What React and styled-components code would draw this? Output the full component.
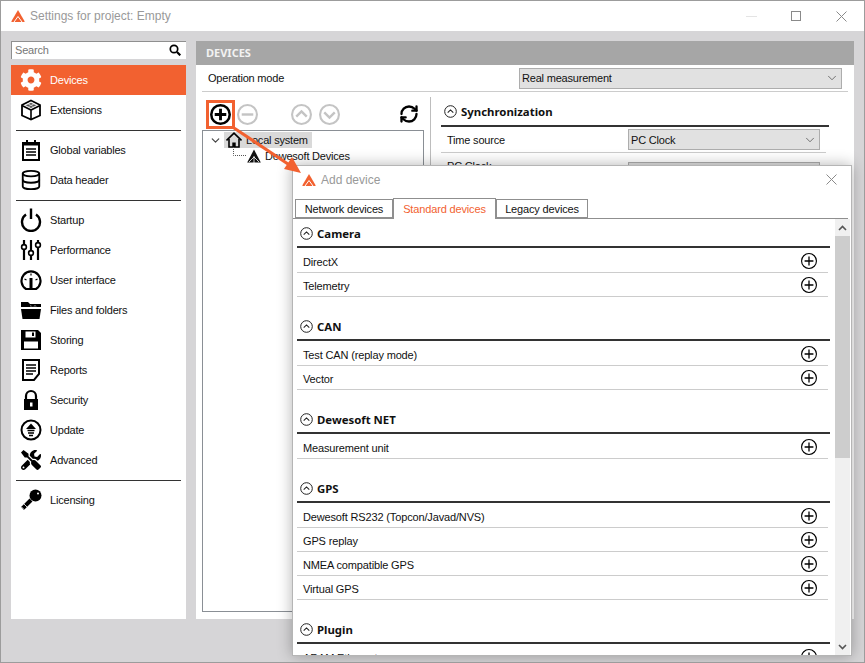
import styled, { createGlobalStyle } from "styled-components";
import { RefreshCw, ChevronDown, Database } from "lucide-react";
import { FaCog, FaTools } from "react-icons/fa";

const accent = "#f26130";

const GlobalStyle = createGlobalStyle`
  html, body {
    margin: 0;
    padding: 0;
    background: #d6d5d7;
  }
  * {
    box-sizing: border-box;
  }
  body {
    font-family: "Liberation Sans", "Noto Sans", sans-serif;
    font-size: 11px;
    letter-spacing: -0.2px;
    color: #111;
  }
`;

const Logo = ({ size = 14 }) => (
  <svg width={size} height={size} viewBox="0 0 14 14">
    <path d="M7 1 L13.6 12.2 Q14 13 13 13 L1 13 Q0 13 0.4 12.2 Z" fill={accent} />
    <path d="M7 7.5 L3 13 M7 7.5 L11 13" stroke="#fff" strokeWidth="1" fill="none" />
  </svg>
);

const Chip = ({ size = 14 }) => (
  <svg width={size} height={size} viewBox="0 0 14 14">
    <path d="M7 0.5 L13.8 13.5 L0.2 13.5 Z" fill="#111" />
    <path d="M7 7 L7 14 M7 8 L2 13 M7 8 L12 13" stroke="#fff" strokeWidth="0.8" fill="none" />
  </svg>
);

const CircleSign = ({ size = 20, color = "#000", width = 2, d }) => (
  <svg width={size} height={size} viewBox="0 0 20 20">
    <circle cx="10" cy="10" r={10 - width / 2} fill="none" stroke={color} strokeWidth={width} />
    <path d={d} fill="none" stroke={color} strokeWidth={width * 1.15} />
  </svg>
);

const plus = "M10 4.5 V15.5 M4.5 10 H15.5";
const minus = "M4.5 10 H15.5";
const up = "M5 12 L10 7 L15 12";
const down = "M5 8 L10 13 L15 8";

const SectionChevron = () => (
  <svg width="13" height="13" viewBox="0 0 13 13">
    <circle cx="6.5" cy="6.5" r="5.8" fill="none" stroke="#222" strokeWidth="1" />
    <path d="M3.7 7.6 L6.5 4.9 L9.3 7.6" fill="none" stroke="#222" strokeWidth="1.1" />
  </svg>
);

const Extensions = () => (
  <svg width="22" height="22" viewBox="0 0 22 22" fill="none" stroke="#000">
    <path d="M11 1.5 L20 6 V16.5 L11 20.5 L2 16.5 V6 Z" strokeWidth="1.8" />
    <path d="M2 6.5 L11 11 L20 6.5 M11 11 V20.5" strokeWidth="1.6" />
    <path d="M5.5 6.2 L11 9 L16.5 6.2 L11 3.4 Z" fill="#555" stroke="none" />
    <path d="M8 4.8 L13.5 7.6 M11 3.4 L16 6 M14 4.8 L8.5 7.6 M11 3.4 L6 6" stroke="#fff" strokeWidth="0.6" />
  </svg>
);

const Notepad = () => (
  <svg width="22" height="22" viewBox="0 0 22 22" fill="none" stroke="#000">
    <rect x="3" y="4" width="16" height="17" strokeWidth="2" />
    <path d="M3 5 H19" strokeWidth="3" />
    <path d="M7 1 V5 M15 1 V5" strokeWidth="2" />
    <path d="M6 10 H16 M6 13 H16 M6 16 H16" strokeWidth="1.5" />
  </svg>
);

const Power = () => (
  <svg width="22" height="24" viewBox="0 0 22 24" fill="none" stroke="#000" strokeWidth="2.4">
    <path d="M6 6.5 A9 9 0 1 0 16 6.5" />
    <path d="M11 0.5 V11" />
  </svg>
);

const Sliders = () => (
  <svg width="22" height="22" viewBox="0 0 22 22" fill="none" stroke="#000">
    <path d="M4 1 V21 M11 1 V21 M18 1 V21" strokeWidth="2.2" />
    <circle cx="4" cy="8" r="2.4" fill="#fff" strokeWidth="1.6" />
    <circle cx="11" cy="14" r="2.4" fill="#fff" strokeWidth="1.6" />
    <circle cx="18" cy="6" r="2.4" fill="#fff" strokeWidth="1.6" />
  </svg>
);

const Gauge = () => (
  <svg width="22" height="22" viewBox="0 0 22 22" fill="none" stroke="#000">
    <path d="M6 20 A9.5 9.5 0 1 1 16 20 Z" strokeWidth="2.2" />
    <path d="M11 20 V9" strokeWidth="3" />
    <path d="M4.5 10 L6.5 11 M17.5 10 L15.5 11 M11 4.5 V6.5" strokeWidth="1.2" />
  </svg>
);

const Folder = () => (
  <svg width="22" height="22" viewBox="0 0 22 22" fill="#000">
    <path d="M1 3 H8 L10 5 H21 V8 H1 Z" />
    <path d="M1 10 H21 L19.5 20 H2.5 Z" />
    <path d="M10 6 L13 7.6 L15 6 L17 7.6 H10 Z" fill="#777" />
  </svg>
);

const Floppy = () => (
  <svg width="22" height="22" viewBox="0 0 22 22">
    <path d="M1 1 H18 L21 4 V21 H1 Z" fill="#000" />
    <rect x="5.5" y="2.5" width="10" height="6" fill="#fff" />
    <rect x="12" y="3.5" width="2" height="3.5" fill="#000" />
    <rect x="4" y="12.5" width="14" height="7" fill="#fff" />
  </svg>
);

const Report = () => (
  <svg width="20" height="22" viewBox="0 0 20 22" fill="none" stroke="#000">
    <path d="M2 1 H18 V15 L13 21 H2 Z" strokeWidth="2" />
    <path d="M5 6 H15 M5 9 H15 M5 12 H15 M5 15 H12" strokeWidth="1.4" />
  </svg>
);

const Lock = () => (
  <svg width="22" height="22" viewBox="0 0 22 22">
    <path d="M6 10 V7 A5 5 0 0 1 16 7 V10" fill="none" stroke="#000" strokeWidth="2.2" />
    <path d="M4 10 H18 V21 H4 Z" fill="#000" />
    <rect x="10" y="13.5" width="2.5" height="4" fill="#fff" />
  </svg>
);

const Update = () => (
  <svg width="22" height="22" viewBox="0 0 22 22" fill="none" stroke="#000">
    <circle cx="11" cy="11" r="9.5" strokeWidth="2" />
    <path d="M11 4.5 L16 10 H6 Z" fill="#000" stroke="none" />
    <path d="M7.5 11.5 H14.5 M8 14 H14 M9 16.5 H13" strokeWidth="1.6" />
  </svg>
);

const KeyIcon = () => (
  <svg width="22" height="22" viewBox="0 0 22 22">
    <circle cx="15.5" cy="6.5" r="6" fill="#000" />
    <circle cx="18" cy="4.5" r="1" fill="#fff" />
    <path d="M11 11 L2.5 19.5" stroke="#000" strokeWidth="4" />
    <path d="M4 15 L7 18 M1.5 18 L4 20.5" stroke="#fff" strokeWidth="0.8" />
  </svg>
);

const Home = () => (
  <svg width="16" height="16" viewBox="0 0 16 16" fill="none" stroke="#000" strokeWidth="1.6">
    <path d="M0.5 8.5 L8 1.2 L15.5 8.5" />
    <path d="M3 7 V15 H13 V7" />
    <rect x="6.3" y="10.5" width="3.4" height="4.5" fill="#000" stroke="none" />
  </svg>
);

const navGroups = [
  [
    { label: "Devices", icon: <FaCog size={22} color="#fff" />, active: true },
    { label: "Extensions", icon: <Extensions /> },
  ],
  [
    { label: "Global variables", icon: <Notepad /> },
    { label: "Data header", icon: <Database size={22} strokeWidth={2} color="#000" /> },
  ],
  [
    { label: "Startup", icon: <Power /> },
    { label: "Performance", icon: <Sliders /> },
    { label: "User interface", icon: <Gauge /> },
    { label: "Files and folders", icon: <Folder /> },
    { label: "Storing", icon: <Floppy /> },
    { label: "Reports", icon: <Report /> },
    { label: "Security", icon: <Lock /> },
    { label: "Update", icon: <Update /> },
    { label: "Advanced", icon: <FaTools size={20} color="#000" /> },
  ],
  [{ label: "Licensing", icon: <KeyIcon /> }],
];

const sections = [
  { title: "Camera", items: ["DirectX", "Telemetry"] },
  { title: "CAN", items: ["Test CAN (replay mode)", "Vector"] },
  { title: "Dewesoft NET", items: ["Measurement unit"] },
  {
    title: "GPS",
    items: ["Dewesoft RS232 (Topcon/Javad/NVS)", "GPS replay", "NMEA compatible GPS", "Virtual GPS"],
  },
  { title: "Plugin", items: ["ARAM Ethernet"] },
];

export default function App() {
  return (
    <Window>
      <GlobalStyle />
      <TitleBar>
        <Logo />
        <TitleText>Settings for project: Empty</TitleText>
        <WindowButtons>
          <MinimizeMark />
          <MaximizeMark />
          <CloseMark>
            <svg width="11" height="11" viewBox="0 0 11 11" stroke="#8a8a8a" fill="none">
              <path d="M0.5 0.5 L10.5 10.5 M10.5 0.5 L0.5 10.5" />
            </svg>
          </CloseMark>
        </WindowButtons>
      </TitleBar>

      <Content>
        <Sidebar>
          <SearchBox>
            <SearchLabel>Search</SearchLabel>
            <svg width="12" height="12" viewBox="0 0 12 12" fill="none" stroke="#000">
              <circle cx="5" cy="5" r="3.7" strokeWidth="1.7" />
              <path d="M8 8 L11.3 11.3" strokeWidth="2.2" />
            </svg>
          </SearchBox>
          <NavPanel>
            {navGroups.map((group, i) => (
              <NavGroup key={i} $first={i === 0}>
                {group.map((item) => (
                  <NavItem key={item.label} $active={item.active}>
                    <NavIcon>{item.icon}</NavIcon>
                    {item.label}
                  </NavItem>
                ))}
              </NavGroup>
            ))}
          </NavPanel>
        </Sidebar>

        <Main>
          <MainHeader>DEVICES</MainHeader>
          <MainBody>
            <ModeRow>
              <span>Operation mode</span>
              <Select $width={323}>
                Real measurement
                <ChevronDown size={14} strokeWidth={1.2} color="#444" />
              </Select>
            </ModeRow>
            <Split>
              <LeftPane>
                <Toolbar>
                  <AddButton>
                    <CircleSign size={21} width={2.4} d={plus} />
                  </AddButton>
                  <ToolButton>
                    <CircleSign size={21} color="#c4c4c4" d={minus} />
                  </ToolButton>
                  <ToolButton $gap={32}>
                    <CircleSign size={21} color="#c4c4c4" d={up} />
                  </ToolButton>
                  <ToolButton $gap={6}>
                    <CircleSign size={21} color="#c4c4c4" d={down} />
                  </ToolButton>
                  <RefreshButton>
                    <RefreshCw size={20} strokeWidth={2.8} color="#000" />
                  </RefreshButton>
                </Toolbar>
                <Tree>
                  <TreeRoot>
                    <ChevronDown size={13} strokeWidth={2.2} color="#444" />
                    <RootLabel>
                      <Home />
                      Local system
                    </RootLabel>
                  </TreeRoot>
                  <TreeChild>
                    <svg width="14" height="12" viewBox="0 0 14 12" fill="none">
                      <path d="M0.5 0 V8.5 H14" stroke="#555" strokeDasharray="1 1" />
                    </svg>
                    <Chip />
                    Dewesoft Devices
                  </TreeChild>
                </Tree>
              </LeftPane>
              <RightPane>
                <PaneHeading>
                  <SectionChevron />
                  Synchronization
                </PaneHeading>
                <SettingRow>
                  <span>Time source</span>
                  <Select $width={192}>
                    PC Clock
                    <ChevronDown size={14} strokeWidth={1.2} color="#444" />
                  </Select>
                </SettingRow>
                <ClockRow>
                  <span>PC Clock</span>
                  <Select $width={192} />
                </ClockRow>
              </RightPane>
            </Split>
          </MainBody>
        </Main>
      </Content>

      <Dialog>
        <DialogTitle>
          <Logo />
          <DialogTitleText>Add device</DialogTitleText>
          <DialogClose>
            <svg width="11" height="11" viewBox="0 0 11 11" stroke="#8a8a8a" fill="none">
              <path d="M0.5 0.5 L10.5 10.5 M10.5 0.5 L0.5 10.5" />
            </svg>
          </DialogClose>
        </DialogTitle>
        <Tabs>
          <Tab $width={98}>Network devices</Tab>
          <Tab $width={103} $active>
            Standard devices
          </Tab>
          <Tab $width={92}>Legacy devices</Tab>
        </Tabs>
        <DialogBody>
          <DeviceList>
            {sections.map((section) => (
              <Section key={section.title}>
                <SectionHead>
                  <SectionChevron />
                  {section.title}
                </SectionHead>
                {section.items.map((item) => (
                  <DeviceRow key={item}>
                    <DeviceName>{item}</DeviceName>
                    <CircleSign size={16} width={1.4} d={plus} />
                  </DeviceRow>
                ))}
              </Section>
            ))}
          </DeviceList>
          <Scrollbar>
            <ScrollArrow>
              <svg width="9" height="6" viewBox="0 0 9 6" fill="none" stroke="#555" strokeWidth="1.6">
                <path d="M1 5 L4.5 1.5 L8 5" />
              </svg>
            </ScrollArrow>
            <ScrollThumb />
            <ScrollArrow $bottom>
              <svg width="9" height="6" viewBox="0 0 9 6" fill="none" stroke="#555" strokeWidth="1.6">
                <path d="M1 1 L4.5 4.5 L8 1" />
              </svg>
            </ScrollArrow>
          </Scrollbar>
        </DialogBody>
      </Dialog>

      <Pointer width="80" height="60" viewBox="0 0 80 60">
        <path d="M2 2 L62 42" stroke={accent} strokeWidth="3" />
        <path d="M69 47 L52 43 L60 31 Z" fill={accent} />
      </Pointer>
    </Window>
  );
}

const Window = styled.div`
  position: relative;
  width: 865px;
  height: 663px;
  overflow: hidden;
  background: #d6d5d7;
  border: 1px solid #9c9c9c;
`;

const TitleBar = styled.div`
  display: flex;
  align-items: center;
  height: 30px;
  padding: 0 10px 0 10px;
  background: #fff;
`;

const TitleText = styled.span`
  margin-left: 5px;
  font-size: 12px;
  letter-spacing: 0;
  color: #999;
`;

const WindowButtons = styled.div`
  display: flex;
  align-items: center;
  margin-left: auto;
`;

const MinimizeMark = styled.div`
  width: 11px;
  height: 1px;
  background: #e4e4e4;
`;

const MaximizeMark = styled.div`
  width: 10px;
  height: 10px;
  margin-left: 34px;
  border: 1px solid #8a8a8a;
`;

const CloseMark = styled.div`
  display: flex;
  margin-left: 35px;
  margin-right: 7px;
`;

const Content = styled.div`
  display: flex;
  gap: 10px;
  padding: 10px 10px 0 10px;
`;

const Sidebar = styled.div`
  display: flex;
  flex-direction: column;
  width: 175px;
`;

const SearchBox = styled.div`
  display: flex;
  align-items: center;
  justify-content: space-between;
  height: 18px;
  margin-bottom: 6px;
  padding: 0 5px 1px 3px;
  background: #fff;
  border: 1px solid #8f8f8f;
  border-width: 1px 0 0 1px;
`;

const SearchLabel = styled.span`
  color: #777;
`;

const NavPanel = styled.div`
  height: 554px;
  background: #fff;
`;

const NavGroup = styled.div`
  margin: 0 5px;
  padding: ${(props) => (props.$first ? "0 0 5px" : "4px 0 5px")};
  border-bottom: 1px solid #333;

  &:last-child {
    border-bottom: 0;
  }
`;

const NavItem = styled.div`
  display: flex;
  align-items: center;
  height: 30px;
  margin: 0 -5px;
  padding-left: 9px;
  background: ${(props) => (props.$active ? accent : "transparent")};
  color: ${(props) => (props.$active ? "#fff" : "#111")};
`;

const NavIcon = styled.div`
  display: flex;
  align-items: center;
  justify-content: center;
  width: 22px;
  margin-right: 8px;
`;

const Main = styled.div`
  display: flex;
  flex-direction: column;
  width: 658px;
`;

const MainHeader = styled.div`
  display: flex;
  align-items: center;
  height: 24px;
  padding: 0 0 2px 10px;
  background: #a6a6a6;
  color: #f2f2f2;
  font-family: "Noto Sans", sans-serif;
  font-size: 11px;
  font-weight: 700;
  letter-spacing: 0;
`;

const MainBody = styled.div`
  height: 554px;
  padding: 0 6px;
  background: #fff;
`;

const ModeRow = styled.div`
  display: flex;
  align-items: center;
  justify-content: space-between;
  height: 27px;
  padding: 0 6px;
  border-bottom: 1px solid #ccc;
`;

const Select = styled.div`
  display: flex;
  align-items: center;
  justify-content: space-between;
  width: ${(props) => props.$width}px;
  height: 21px;
  padding: 0 2px;
  background: #e1e1e1;
  border: 1px solid #adadad;
`;

const Split = styled.div`
  display: flex;
  padding-top: 5px;
`;

const LeftPane = styled.div`
  width: 229px;
  height: 515px;
  padding-right: 6px;
  border-right: 1px solid #bdbdbd;
`;

const Toolbar = styled.div`
  display: flex;
  align-items: center;
  height: 33px;
  padding-left: 4px;
`;

const AddButton = styled.div`
  display: flex;
  align-items: center;
  justify-content: center;
  width: 29px;
  height: 29px;
  border: 3px solid ${accent};
  margin-top: 1px;
`;

const ToolButton = styled.div`
  display: flex;
  justify-content: center;
  width: 22px;
  margin-left: ${(props) => props.$gap || 1}px;
  margin-top: 1px;
`;

const RefreshButton = styled.div`
  display: flex;
  margin-left: auto;
  margin-right: 5px;
`;

const Tree = styled.div`
  height: 482px;
  padding: 1px 0 0 6px;
  border: 1px solid #8a8f95;
`;

const TreeRoot = styled.div`
  display: flex;
  align-items: center;
  height: 16px;
`;

const RootLabel = styled.div`
  display: flex;
  align-items: center;
  gap: 4px;
  height: 16px;
  margin-left: 2px;
  padding: 0 4px 0 2px;
  background: #d9d9d9;
`;

const TreeChild = styled.div`
  display: flex;
  align-items: center;
  gap: 4px;
  height: 16px;
  padding-left: 24px;

  svg:first-child {
    margin-right: -4px;
    margin-top: -6px;
  }
`;

const RightPane = styled.div`
  width: 398px;
  padding-left: 10px;
`;

const PaneHeading = styled.div`
  display: flex;
  align-items: center;
  gap: 4px;
  height: 30px;
  padding: 1px 0 0 3px;
  border-bottom: 2px solid #333;
  font-family: "Noto Sans", sans-serif;
  font-size: 11.4px;
  font-weight: 700;
  letter-spacing: 0;
`;

const SettingRow = styled.div`
  display: flex;
  align-items: center;
  justify-content: space-between;
  width: 385px;
  height: 26px;
  padding: 0 6px;
  border-bottom: 1px solid #ccc;
`;

const ClockRow = styled.div`
  display: flex;
  align-items: flex-start;
  justify-content: space-between;
  width: 385px;
  padding: 9px 6px 0;

  span {
    margin-top: -2px;
  }
`;

const Dialog = styled.div`
  position: absolute;
  left: 291px;
  top: 164px;
  display: flex;
  flex-direction: column;
  width: 560px;
  height: 491px;
  padding-right: 1px;
  letter-spacing: -0.15px;
  background: #fff;
  border: 1px solid #b5b5b5;
  box-shadow: 0 0 14px rgba(0, 0, 0, 0.3);
`;

const DialogTitle = styled.div`
  display: flex;
  align-items: center;
  height: 29px;
  padding: 0 13px 2px 9px;
`;

const DialogTitleText = styled.span`
  margin-left: 5px;
  font-size: 12px;
  letter-spacing: 0;
  color: #999;
`;

const DialogClose = styled.div`
  display: flex;
  margin-left: auto;
`;

const Tabs = styled.div`
  display: flex;
  align-items: flex-end;
  height: 24px;
  padding-left: 2px;
  margin-right: 2px;
  border-bottom: 1px solid #8f8f8f;
`;

const Tab = styled.div`
  display: flex;
  align-items: center;
  justify-content: center;
  width: ${(props) => props.$width}px;
  height: ${(props) => (props.$active ? "21px" : "19px")};
  margin-bottom: ${(props) => (props.$active ? "-1px" : "0")};
  padding-top: ${(props) => (props.$active ? "0" : "1px")};
  background: #fff;
  border: 1px solid #8f8f8f;
  border-bottom: ${(props) => (props.$active ? "0" : "1px solid #8f8f8f")};
  color: ${(props) => (props.$active ? accent : "#111")};
`;

const DialogBody = styled.div`
  display: flex;
  flex: 1;
  min-height: 0;
`;

const DeviceList = styled.div`
  flex: 1;
  overflow: hidden;
  padding: 0 5px 0 4px;
`;

const Section = styled.div`
  margin-bottom: 15px;
`;

const SectionHead = styled.div`
  display: flex;
  align-items: flex-start;
  gap: 4px;
  height: 29px;
  margin-bottom: 1px;
  padding: 8px 0 0 3px;
  border-bottom: 2px solid #333;
  font-family: "Noto Sans", sans-serif;
  font-size: 11.4px;
  font-weight: 700;
  letter-spacing: 0;
  line-height: 14px;
`;

const DeviceRow = styled.div`
  display: flex;
  align-items: center;
  justify-content: space-between;
  width: 531px;
  height: 24px;
  padding: 0 11px 0 6px;
  border-bottom: 1px solid #ccc;
`;

const DeviceName = styled.span`
  margin-top: 2px;
`;

const Scrollbar = styled.div`
  display: flex;
  flex-direction: column;
  flex-shrink: 0;
  width: 15px;
  background: #f0f0f0;
`;

const ScrollArrow = styled.div`
  display: flex;
  align-items: center;
  justify-content: center;
  height: 17px;
  margin-top: ${(props) => (props.$bottom ? "auto" : "0")};
`;

const ScrollThumb = styled.div`
  height: 222px;
  background: #cdcdcd;
`;

const Pointer = styled.svg`
  position: absolute;
  left: 231px;
  top: 125px;
`;
